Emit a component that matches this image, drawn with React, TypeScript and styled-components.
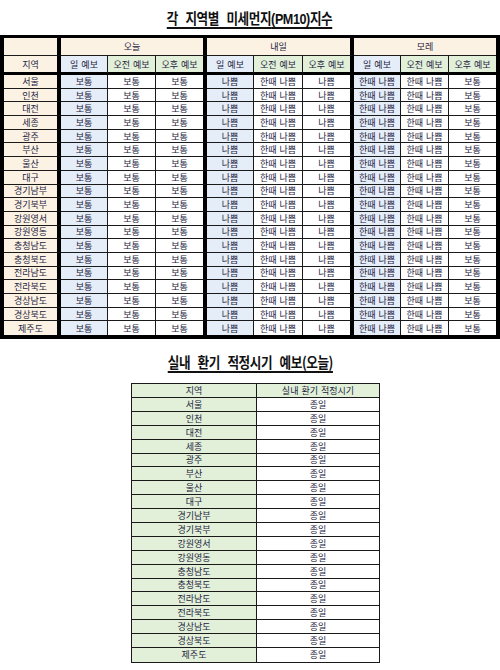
import React from "react";
import styled, { createGlobalStyle } from "styled-components";

const GlobalStyle = createGlobalStyle`
  html, body { margin: 0; padding: 0; background: #ffffff; }
  body { font-family: "Noto Sans CJK KR", "Noto Sans", sans-serif; }
`;

const PEACH = "#fcf2e4";
const BLUE = "#e5edf8";
const GREEN = "#e2f0d9";
const LINE = "#1a1a1a";

const Page = styled.div`
  width: 500px;
  display: flex;
  flex-direction: column;
`;

const Title = styled.div<{ $top: number; $bottom: number }>`
  margin: ${(p) => p.$top}px 0 ${(p) => p.$bottom}px;
  text-align: center;
  font-family: "Noto Sans CJK KR", sans-serif;
  font-weight: 700;
  font-size: 15px;
  line-height: 20px;
  letter-spacing: -0.5px;
  word-spacing: 6px;
  color: #111;
`;

const TitleText = styled.span`
  display: inline-block;
  transform: scaleX(0.84);
  transform-origin: center;
  text-decoration: underline;
  text-decoration-thickness: 1.5px;
  text-underline-offset: 3px;
`;

const Latin = styled.span`
  font-family: "Liberation Sans", Arial, sans-serif;
  font-weight: 700;
  letter-spacing: -0.5px;
`;

const Forecast = styled.div`
  box-sizing: border-box;
  width: 500px;
  border: 4px solid #000;
  border-top-width: 3px;
  display: grid;
  grid-template-columns: 57px 47px 48px 51px 47px 49px 51px 47px 48px 47px;
  grid-template-rows: 18px 19px repeat(19, 13.7px);
`;

type Edge = "none" | "thin" | "thick" | "head";

const edge = (e: Edge) =>
  e === "none"
    ? "0"
    : e === "thin"
    ? `1px solid ${LINE}`
    : e === "head"
    ? "3px solid #000"
    : "4px solid #000";

const Cell = styled.div<{ $bg: string; $right: Edge; $bottom: Edge; $span?: number }>`
  box-sizing: border-box;
  grid-column: span ${(p) => p.$span ?? 1};
  background: ${(p) => p.$bg};
  border-right: ${(p) => edge(p.$right)};
  border-bottom: ${(p) => edge(p.$bottom)};
  display: flex;
  align-items: center;
  justify-content: center;
  font-size: 9px;
  line-height: 1;
  color: #1d2340;
  white-space: nowrap;
  word-spacing: 1px;
  overflow: hidden;
`;

const Ventilation = styled.div`
  box-sizing: border-box;
  margin-left: 131px;
  width: 249px;
  border: 1px solid ${LINE};
  display: grid;
  grid-template-columns: 125px 1fr;
  grid-auto-rows: 13.9px;
`;

const regions = [
  "서울",
  "인천",
  "대전",
  "세종",
  "광주",
  "부산",
  "울산",
  "대구",
  "경기남부",
  "경기북부",
  "강원영서",
  "강원영동",
  "충청남도",
  "충청북도",
  "전라남도",
  "전라북도",
  "경상남도",
  "경상북도",
  "제주도",
];

const days = [
  { name: "오늘", values: ["보통", "보통", "보통"] },
  { name: "내일", values: ["나쁨", "한때 나쁨", "나쁨"] },
  { name: "모레", values: ["한때 나쁨", "한때 나쁨", "보통"] },
];

const subHeads = [
  { label: "일 예보", bg: BLUE },
  { label: "오전 예보", bg: GREEN },
  { label: "오후 예보", bg: GREEN },
];

export default function App() {
  return (
    <Page>
      <GlobalStyle />
      <Title $top={8} $bottom={6}>
        <TitleText>
          각 지역별 미세먼지<Latin>(PM10)</Latin>지수
        </TitleText>
      </Title>
      <Forecast>
        <Cell $bg={PEACH} $right="thick" $bottom="thin" />
        {days.map((d, i) => (
          <Cell
            key={d.name}
            $span={3}
            $bg={PEACH}
            $right={i < 2 ? "thick" : "none"}
            $bottom="thin"
          >
            {d.name}
          </Cell>
        ))}
        <Cell $bg={PEACH} $right="thick" $bottom="head">
          지역
        </Cell>
        {days.map((d, i) =>
          subHeads.map((s, j) => (
            <Cell
              key={`${d.name}-${s.label}`}
              $bg={s.bg}
              $right={j < 2 ? "thin" : i < 2 ? "thick" : "none"}
              $bottom="head"
            >
              {s.label}
            </Cell>
          ))
        )}
        {regions.map((r, ri) => {
          const last = ri === regions.length - 1;
          return (
            <React.Fragment key={r}>
              <Cell $bg={PEACH} $right="thick" $bottom={last ? "none" : "thin"}>
                {r}
              </Cell>
              {days.map((d, i) =>
                d.values.map((v, j) => (
                  <Cell
                    key={`${r}-${d.name}-${j}`}
                    $bg={j === 0 ? BLUE : "#ffffff"}
                    $right={j < 2 ? "thin" : i < 2 ? "thick" : "none"}
                    $bottom={last ? "none" : "thin"}
                  >
                    {v}
                  </Cell>
                ))
              )}
            </React.Fragment>
          );
        })}
      </Forecast>
      <Title $top={13} $bottom={11}>
        <TitleText>실내 환기 적정시기 예보(오늘)</TitleText>
      </Title>
      <Ventilation>
        <Cell $bg={GREEN} $right="thin" $bottom="thin">
          지역
        </Cell>
        <Cell $bg={GREEN} $right="none" $bottom="thin">
          실내 환기 적정시기
        </Cell>
        {regions.map((r, ri) => {
          const last = ri === regions.length - 1;
          return (
            <React.Fragment key={r}>
              <Cell $bg={GREEN} $right="thin" $bottom={last ? "none" : "thin"}>
                {r}
              </Cell>
              <Cell $bg="#ffffff" $right="none" $bottom={last ? "none" : "thin"}>
                종일
              </Cell>
            </React.Fragment>
          );
        })}
      </Ventilation>
    </Page>
  );
}
